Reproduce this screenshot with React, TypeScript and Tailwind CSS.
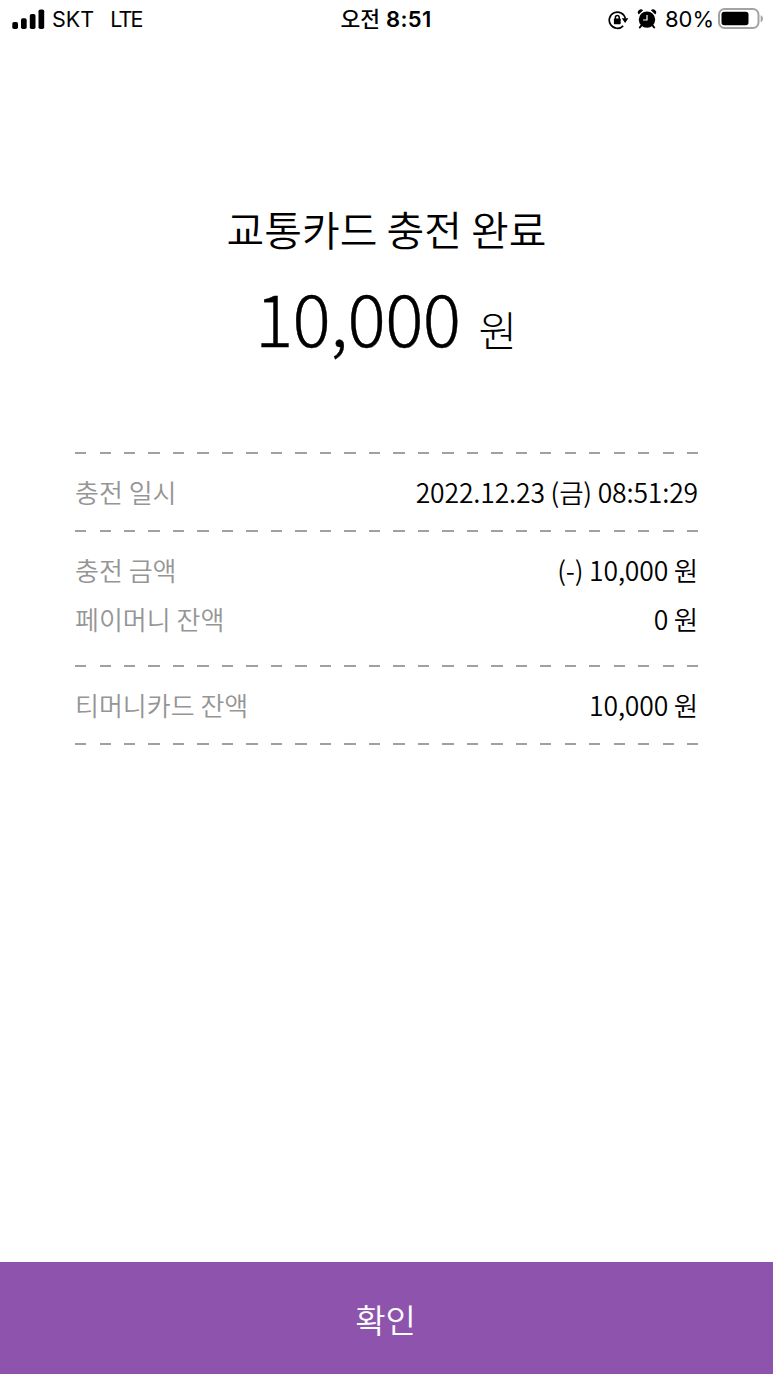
import React from 'react';

export default function App() {
  return (
    <div className="flex h-[1374px] w-[773px] flex-col bg-white font-['Noto_Sans_CJK_KR',sans-serif] text-black">
      <StatusBar />
      <main className="flex flex-1 flex-col px-[75px] pt-[159px]">
        <h1 className="text-center text-[41px] font-[350] leading-[60px]">교통카드 충전 완료</h1>
        <div className="mt-[8px] flex h-[100px] items-baseline justify-center whitespace-nowrap pr-[1px] leading-[100px]">
          <span className="text-[71.5px] font-light tracking-[-0.6px] [-webkit-text-stroke:0.4px_black]">10,000</span>
          <span className="ml-[18px] text-[42px] font-light">원</span>
        </div>

        <section className="mt-[86px]">
          <Divider />
          <div className="py-[14px]">
            <Row label="충전 일시" value="2022.12.23 (금) 08:51:29" />
          </div>
          <Divider />
          <div className="flex h-[133px] flex-col gap-[1px] pt-[14px]">
            <Row label="충전 금액" value="(-) 10,000 원" />
            <Row label="페이머니 잔액" value="0 원" />
          </div>
          <Divider />
          <div className="py-[14px]">
            <Row label="티머니카드 잔액" value="10,000 원" />
          </div>
          <Divider />
        </section>
      </main>
      <button className="h-[112px] w-full bg-[#8e54ad] pr-[2px] pt-[4px] text-[33px] font-[350] text-white">
        확인
      </button>
    </div>
  );
}

function Row({ label, value }: { label: string; value: string }) {
  return (
    <div className="flex h-[48px] items-center justify-between leading-[48px]">
      <span className="text-[26px] font-[350] text-[#959595]">{label}</span>
      <span className="text-[26.5px] font-[350] tracking-[-0.16px]">{value}</span>
    </div>
  );
}

function Divider() {
  return (
    <div className="h-[2px] w-[624px] bg-[repeating-linear-gradient(to_right,#a0a0a0_0_11px,transparent_11px_24.5px)]" />
  );
}

function StatusBar() {
  return (
    <header className="grid h-[39px] grid-cols-3 items-center font-['Inter','Noto_Sans_CJK_KR',sans-serif] text-[21px] leading-[39px]">
      <div className="flex items-center pl-[12px]">
        <SignalIcon />
        <span className="ml-[7px] text-[21.5px]">SKT</span>
        <span className="ml-[16px] text-[21.5px] tracking-[-1.8px]">LTE</span>
      </div>
      <div className="pr-[1px] text-center">
        <span className="text-[21.5px] font-medium">오전</span>
        <span className="ml-[6px] text-[22px] font-semibold tracking-[0.3px]">8:51</span>
      </div>
      <div className="flex items-center justify-end pr-[9px]">
        <RotationLockIcon />
        <AlarmIcon />
        <span className="ml-[8px] text-[22px]">80%</span>
        <BatteryIcon />
      </div>
    </header>
  );
}

function SignalIcon() {
  return (
    <svg className="-mt-[2px]" width="33" height="20" viewBox="0 0 33 20">
      <rect x="0.3" y="13" width="5.7" height="7" rx="1.8" />
      <rect x="9" y="9.3" width="5.7" height="10.7" rx="1.8" />
      <rect x="17.8" y="5" width="5.7" height="15" rx="1.8" />
      <rect x="26.5" y="0.5" width="5.7" height="19.5" rx="1.8" />
    </svg>
  );
}

function RotationLockIcon() {
  return (
    <svg width="21" height="20" viewBox="0 0 21 20" fill="none">
      <path d="M15.2 15.8A8.1 8.1 0 1 1 17.3 8.5" stroke="#000" strokeWidth="1.7" />
      <path d="M13.8 8.2h6.6l-3.3 4.8z" fill="#000" />
      <rect x="5.9" y="8.6" width="6.8" height="5.6" rx="0.7" fill="#000" />
      <path d="M7.4 9.3V7.4a1.9 1.9 0 0 1 3.8 0v1.9" stroke="#000" strokeWidth="1.5" />
    </svg>
  );
}

function AlarmIcon() {
  return (
    <svg className="ml-[8px] -mt-[2px]" width="20" height="20" viewBox="0 0 20 20" fill="none">
      <circle cx="10" cy="10.6" r="8.2" fill="#000" />
      <path d="M1.7 5.4a3 3 0 0 1 4.4-4.1zM18.3 5.4a3 3 0 0 0-4.4-4.1z" fill="#000" />
      <path d="M4.3 16.6l-1.5 1.9M15.7 16.6l1.5 1.9" stroke="#000" strokeWidth="2" strokeLinecap="round" />
      <path d="M10 6v5H6" stroke="#fff" strokeWidth="1.2" />
    </svg>
  );
}

function BatteryIcon() {
  return (
    <svg className="-mt-[1px] ml-[4px]" width="46" height="22" viewBox="0 0 46 22">
      <rect x="1" y="1" width="39.5" height="19" rx="5.5" fill="none" stroke="#a3a3a3" strokeWidth="2" />
      <rect x="3.5" y="3.7" width="27" height="13.6" rx="2.8" />
      <path d="M42.7 7.3c3 1.2 3 5.7 0 7z" fill="#a3a3a3" />
    </svg>
  );
}
